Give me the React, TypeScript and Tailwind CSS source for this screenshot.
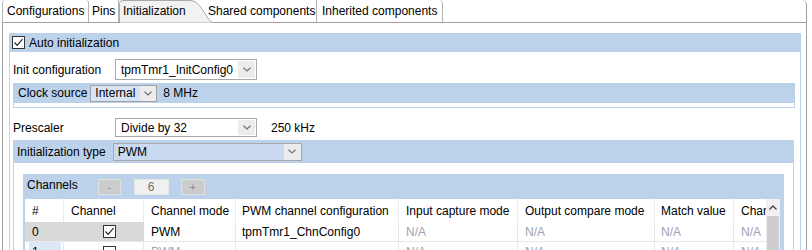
import React from "react";

function Chevron({ up = false }: { up?: boolean }) {
  return (
    <svg width="8" height="5" viewBox="0 0 8 5" className="block">
      {up ? (
        <polyline points="0.5,4.5 4,1 7.5,4.5" fill="none" stroke="#404040" strokeWidth="1.3" />
      ) : (
        <polyline points="0.5,0.8 4,4 7.5,0.8" fill="none" stroke="#707070" strokeWidth="1.2" />
      )}
    </svg>
  );
}

function Check({ checked }: { checked: boolean }) {
  return (
    <div className="w-[13px] h-[13px] border border-[#333333] bg-white flex items-center justify-center shrink-0">
      {checked && (
        <svg width="11" height="11" viewBox="0 0 11 11" className="block">
          <polyline points="1.5,5.5 4.2,8.3 9.5,2.2" fill="none" stroke="#222222" strokeWidth="1.2" />
        </svg>
      )}
    </div>
  );
}

function ArrowBox({ className }: { className: string }) {
  return (
    <div className={"flex items-center justify-center bg-[#ececec] " + className}>
      <Chevron />
    </div>
  );
}

export default function App() {
  return (
    <div className="w-[812px] h-[250px] overflow-hidden bg-white text-[12px] leading-[14px] text-black whitespace-nowrap font-['Liberation_Sans',Arial,sans-serif]">
      <div className="ml-[2px] w-[805px] h-[250px] border-r border-[#a0a0a0] rounded-tr-[5px] flex flex-col">
        {/* Tabs */}
        <div className="h-[23px] shrink-0 flex items-stretch border-b border-[#a0a0a0]">
          <div className="w-[87px] border-l border-r border-[#b4b4b4] rounded-t-[3px] pl-[4px] flex items-center">Configurations</div>
          <div className="w-[30px] border-r border-[#b4b4b4] pl-[3px] flex items-center">Pins</div>
          <div className="relative z-10 w-[87px] pl-[4px] flex items-center">
            <svg width="95" height="23" viewBox="0 0 95 23" className="absolute left-0 top-0">
              <path
                d="M0.5,23 L0.5,3.5 Q0.5,0.5 3.5,0.5 L70,0.5 C78,0.5 80,5 85,12 C89,18 91,22.5 95,22.5 L95,23 Z"
                fill="#f2f2f2"
                stroke="#a8a8a8"
                strokeWidth="1"
              />
            </svg>
            <span className="relative">Initialization</span>
          </div>
          <div className="w-[111px] border-r border-[#b4b4b4] pl-[2px] flex items-center">Shared components</div>
          <div className="w-[126px] border-r border-[#b4b4b4] rounded-tr-[4px] pl-[5px] flex items-center">Inherited components</div>
          <div className="flex-1" />
        </div>

        {/* Content */}
        <div className="flex-1 border-l border-[#a0a0a0] pt-[10px] pl-[6px] pr-[5px]">
          {/* Auto initialization group */}
          <div className="h-[19px] bg-[#bcd2eb] flex items-center pl-[3px] gap-[4px]">
            <Check checked />
            <span>Auto initialization</span>
          </div>
          <div className="border-x border-[#bcd2eb] pl-[3px] pr-[5px] pt-[7px]">
            {/* Init configuration */}
            <div className="flex items-center h-[21px]">
              <div className="w-[102px]">Init configuration</div>
              <div className="w-[142px] h-[21px] border border-[#a9a9a9] bg-white flex">
                <div className="flex-1 pl-[5px] flex items-center">tpmTmr1_InitConfig0</div>
                <ArrowBox className="w-[17px] m-[1px]" />
              </div>
            </div>

            {/* Clock source group */}
            <div className="mt-[3px] h-[20px] bg-[#bcd2eb] flex items-center pl-[5px]">
              <span>Clock source</span>
              <div className="ml-[3px] w-[67px] h-[17px] border border-[#a0a0a0] bg-[#d6e4f5] flex">
                <div className="flex-1 pl-[4px] flex items-center">Internal</div>
                <ArrowBox className="w-[16px]" />
              </div>
              <span className="ml-[6px]">8 MHz</span>
            </div>
            <div className="h-[5px] border-x border-b border-[#bcd2eb]" />

            {/* Prescaler */}
            <div className="mt-[10px] flex items-center h-[19px]">
              <div className="w-[102px]">Prescaler</div>
              <div className="w-[142px] h-[19px] border border-[#a9a9a9] bg-white flex">
                <div className="flex-1 pl-[5px] flex items-center">Divide by 32</div>
                <ArrowBox className="w-[17px] m-[1px]" />
              </div>
              <span className="ml-[14px]">250 kHz</span>
            </div>

            {/* Initialization type group */}
            <div className="mt-[3px] mr-[1px]">
              <div className="h-[23px] bg-[#bcd2eb] flex items-center pl-[4px]">
                <span>Initialization type</span>
                <div className="ml-[7px] w-[189px] h-[18px] border border-[#a9a9a9] bg-[#c9daf0] flex">
                  <div className="flex-1 pl-[4px] flex items-center">PWM</div>
                  <ArrowBox className="w-[17px]" />
                </div>
              </div>
              <div className="border-x border-[#bcd2eb] pl-[9px] pr-[9px] pt-[11px]">
                {/* Channels group */}
                <div className="h-[25px] bg-[#bcd2eb] flex items-center pl-[4px]">
                  <span className="-mt-[3px]">Channels</span>
                  <div className="ml-[20px] w-[23px] h-[16px] bg-[#cccccc] border border-[#e0e0e0] flex items-center justify-center text-[#8a8a8a] text-[11px]">-</div>
                  <div className="ml-[13px] w-[35px] h-[16px] bg-[#f0f0f0] border border-[#e4e4e4] flex items-center justify-center text-[#707070]">6</div>
                  <div className="ml-[12px] w-[24px] h-[16px] bg-[#cccccc] border border-[#e0e0e0] flex items-center justify-center text-[#8a8a8a] text-[11px]">+</div>
                </div>
                <div className="flex border-l-2 border-r-[4px] border-[#bcd2eb] h-[60px]">
                  <div className="flex-1 overflow-hidden bg-white">
                    <div className="grid grid-cols-[39px_80px_92px_163px_119px_137px_79px_60px] w-[769px]">
                      {/* header */}
                      <div className="h-[23px] pl-[7px] flex items-center border-r border-[#ececec]">#</div>
                      <div className="h-[23px] pl-[7px] flex items-center border-r border-[#ececec]">Channel</div>
                      <div className="h-[23px] pl-[7px] flex items-center border-r border-[#ececec]">Channel mode</div>
                      <div className="h-[23px] pl-[6px] flex items-center border-r border-[#ececec]">PWM channel configuration</div>
                      <div className="h-[23px] pl-[7px] flex items-center border-r border-[#ececec]">Input capture mode</div>
                      <div className="h-[23px] pl-[7px] flex items-center border-r border-[#ececec]">Output compare mode</div>
                      <div className="h-[23px] pl-[6px] flex items-center border-r border-[#ececec]">Match value</div>
                      <div className="h-[23px] pl-[7px] flex items-center">Channel</div>

                      {/* row 0 */}
                      <div className="h-[20px] pl-[7px] flex items-center bg-[#d9d9d9] border-b border-[#e8e8e8]">0</div>
                      <div className="h-[20px] flex items-center justify-center pl-[11px] bg-[#d9d9d9] border-b border-[#e8e8e8]">
                        <Check checked />
                      </div>
                      <div className="h-[20px] pl-[7px] flex items-center border-b border-r border-[#e8e8e8]">PWM</div>
                      <div className="h-[20px] pl-[6px] flex items-center border-b border-r border-[#e8e8e8]">tpmTmr1_ChnConfig0</div>
                      <div className="h-[20px] pl-[7px] flex items-center border-b border-r border-[#e8e8e8] text-[#a3a3b0]">N/A</div>
                      <div className="h-[20px] pl-[7px] flex items-center border-b border-r border-[#e8e8e8] text-[#a3a3b0]">N/A</div>
                      <div className="h-[20px] pl-[6px] flex items-center border-b border-r border-[#e8e8e8] text-[#a3a3b0]">N/A</div>
                      <div className="h-[20px] pl-[7px] flex items-center border-b border-[#e8e8e8] text-[#a3a3b0]">N/A</div>

                      {/* row 1 */}
                      <div className="h-[20px] pl-[4px] pr-[2px] flex items-stretch border-r border-[#e8e8e8]">
                        <div className="flex-1 bg-[#dce8f5] pl-[3px] pt-[3px]">1</div>
                      </div>
                      <div className="h-[20px] flex items-center justify-center pl-[11px] border-r border-[#e8e8e8]">
                        <Check checked={false} />
                      </div>
                      <div className="h-[20px] pl-[7px] flex items-center border-r border-[#e8e8e8] text-[#a3a3b0]">PWM</div>
                      <div className="h-[20px] pl-[6px] flex items-center border-r border-[#e8e8e8]"></div>
                      <div className="h-[20px] pl-[7px] flex items-center border-r border-[#e8e8e8] text-[#a3a3b0]">N/A</div>
                      <div className="h-[20px] pl-[7px] flex items-center border-r border-[#e8e8e8] text-[#a3a3b0]">N/A</div>
                      <div className="h-[20px] pl-[6px] flex items-center border-r border-[#e8e8e8] text-[#a3a3b0]">N/A</div>
                      <div className="h-[20px] pl-[7px] flex items-center text-[#a3a3b0]">N/A</div>
                    </div>
                  </div>
                  {/* scrollbar */}
                  <div className="w-[14px] bg-[#f0f0f0] flex flex-col">
                    <div className="h-[17px] flex items-center justify-center">
                      <Chevron up />
                    </div>
                    <div className="flex-1 mx-[1px] bg-[#cdcdcd]" />
                  </div>
                </div>
              </div>
            </div>
          </div>
        </div>
      </div>
    </div>
  );
}
